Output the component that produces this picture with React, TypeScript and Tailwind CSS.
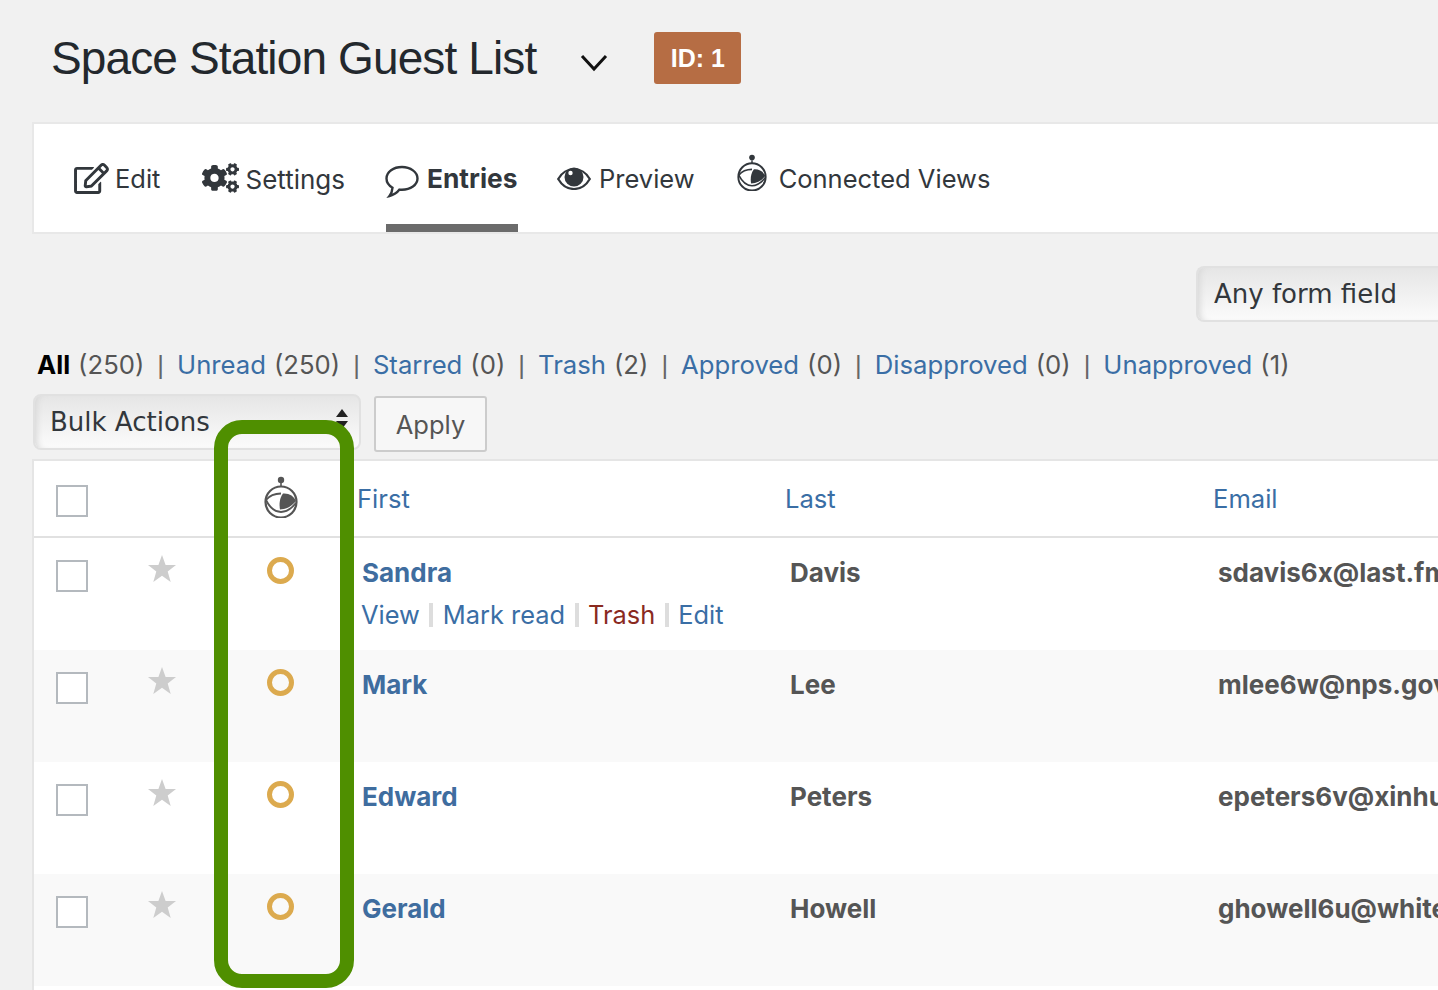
import { FaCogs, FaRegEdit } from "react-icons/fa";

const sans = "font-['Inter',sans-serif]";

function ViewsLogo({ className }: { className: string }) {
  return (
    <svg viewBox="0 0 34 42" className={className} fill="none" stroke="currentColor">
      <circle cx="17" cy="4" r="3.2" fill="currentColor" stroke="none" />
      <path d="M17 7v4" strokeWidth="1.6" />
      <circle cx="17" cy="26" r="15.5" strokeWidth="2.2" />
      <path d="M2 24c4-5 9-6.500 15-6.500" strokeWidth="1.800" />
      <path d="M2 24c4 8 9 12 15 12s11-4 15-9" strokeWidth="1.800" />
      <path d="M16 33.500c-1-5.500-.5-11.500 3-16 6-.5 11 2.500 13 7.500-4 5-9 8-16 8.500z" fill="currentColor" stroke="none" />
    </svg>
  );
}

function Bubble() {
  return (
    <svg viewBox="0 0 34 33" className="w-[34px] h-[33px] text-[#32373c]" fill="none" stroke="currentColor" strokeWidth="2.4">
      <path d="M17 2C8.500 2 1.500 6.800 1.500 13.500c0 3.800 2.300 7 6 9.200-.2 3-1 5.800-3 8.300 4-1 7.800-3.500 10-6.400 1 .1 1.800.1 2.500.1 8.500 0 15.500-4.800 15.500-11.200S25.500 2 17 2z" />
    </svg>
  );
}

function Eye() {
  return (
    <svg viewBox="0 0 34 24" className="w-[34px] h-[24px] text-[#32373c]" fill="none" stroke="currentColor" strokeWidth="2.2">
      <path d="M1.200 13C5 6.500 10.500 3 17 3s12 3.500 15.800 10c-3.800 6.500-9.300 10-15.800 10S5 19.500 1.200 13z" />
      <circle cx="17" cy="11" r="9.500" fill="currentColor" stroke="none" />
      <circle cx="13.500" cy="7" r="2.200" fill="white" stroke="none" />
    </svg>
  );
}

function Star() {
  return (
    <svg viewBox="0 0 28 28" className="w-[28px] h-[28px] text-[#cdcdcd]" fill="currentColor">
      <path d="M14 0l3.600 10H28l-8.300 6.400 3 10.600L14 20.800 5.300 27l3-10.600L0 10h10.400z" />
    </svg>
  );
}

function Box() {
  return <div className="w-[32px] h-[32px] bg-white border-2 border-[#b4b9be] ml-[22px]" />;
}

function Sep() {
  return <div className="w-[4px] h-[24px] mt-[2px] mx-[9.500px] bg-[#dddddd]" />;
}

const cols = "grid grid-cols-[94px_68px_161px_428px_428px_1fr]";

const rows = [
  { first: "Sandra", last: "Davis", email: "sdavis6x@last.fm", actions: true },
  { first: "Mark", last: "Lee", email: "mlee6w@nps.gov", actions: false },
  { first: "Edward", last: "Peters", email: "epeters6v@xinhuanet.com", actions: false },
  { first: "Gerald", last: "Howell", email: "ghowell6u@whitehouse.gov", actions: false },
];

const filters = [
  ["Unread", "250"],
  ["Starred", "0"],
  ["Trash", "2"],
  ["Approved", "0"],
  ["Disapproved", "0"],
  ["Unapproved", "1"],
];

export default function App() {
  return (
    <div className={`relative w-[1438px] h-[990px] overflow-hidden bg-[#f1f1f1] ${sans} text-[#32373c]`}>
      {/* Title */}
      <div className="flex items-center h-[122px] pl-[51px] pb-[6px]">
        <h1 className="font-['Liberation_Sans',sans-serif] text-[46px] leading-none tracking-[-0.87px] text-[#23282d] whitespace-nowrap">
          Space Station Guest List
        </h1>
        <svg viewBox="0 0 28 18" className="w-[28px] h-[18px] ml-[44px] mt-[10px] text-[#111]" fill="none" stroke="currentColor" strokeWidth="3">
          <path d="M2 2l12 13L26 2" />
        </svg>
        <div className="ml-[46px] w-[87px] h-[52px] pt-[2px] rounded-[3px] bg-[#b66d44] text-white font-['Liberation_Sans',sans-serif] font-bold text-[25px] flex items-center justify-center">
          ID: 1
        </div>
      </div>

      {/* Tabs */}
      <div className="ml-[32px] h-[112px] bg-white border-2 border-r-0 border-[#e8e8e8] flex pl-[40px] text-[25.5px] text-[#32373c] whitespace-nowrap">
        <div className="flex items-center gap-[6px] h-[108px]">
          <FaRegEdit className="w-[35px] h-[31px] text-[#32373c]" />
          <span className="mt-[2px]">Edit</span>
        </div>
        <div className="flex items-center gap-[6px] h-[108px] ml-[42px]">
          <FaCogs className="w-[37px] h-[34px] text-[#32373c]" />
          <span className="mt-[2px] text-[26px]">Settings</span>
        </div>
        <div className="relative flex items-center h-[108px] ml-[41px] w-[132px] border-b-[8px] border-[#6b6b6b] font-bold text-[26.3px]">
          <div className="absolute left-[-1px] top-[41px]">
            <Bubble />
          </div>
          <span className="pl-[41px] pt-[10px]">Entries</span>
        </div>
        <div className="flex items-center gap-[8px] h-[108px] ml-[39px]">
          <Eye />
          <span className="mt-[2px]">Preview</span>
        </div>
        <div className="flex items-center gap-[12px] h-[108px] ml-[42px]">
          <ViewsLogo className="w-[30px] h-[37px] text-[#32373c] -mt-[11px]" />
          <span className="mt-[2px]">Connected Views</span>
        </div>
      </div>

      {/* Search field */}
      <div className="flex justify-end h-[56px] mt-[32px]">
        <div className="w-[242px] h-[56px] rounded-l-[8px] border-2 border-r-0 border-[#e1e1e1] bg-gradient-to-b from-[#e6e6e6] to-[#fbfbfb] shadow-[inset_6px_0_6px_-4px_#d8d8d8] font-['DejaVu_Sans',sans-serif] text-[26px] leading-[52px] pl-[16px] text-[#32373c]">
          Any form field
        </div>
      </div>

      {/* Filters */}
      <div className="flex items-center h-[32px] mt-[27px] ml-[37px] text-[25.7px] whitespace-nowrap text-[#555]">
        <span className="font-bold text-black">All</span>
        <span className="ml-[8px]">(250)</span>
        {filters.map(([label, count]) => (
          <span key={label} className="flex">
            <span className="font-['Liberation_Sans',sans-serif] text-[#666] mx-[13px]">|</span>
            <span className="text-[#3a6ea5]">{label}</span>
            <span className="ml-[8px]">({count})</span>
          </span>
        ))}
      </div>

      {/* Bulk actions */}
      <div className="flex ml-[33px] mt-[13px] h-[65px]">
        <div className="relative w-[328px] h-[56px] rounded-[8px] border-2 border-[#e1e1e1] bg-gradient-to-b from-[#e6e6e6] to-[#fbfbfb] shadow-[inset_6px_0_6px_-4px_#d8d8d8] font-['DejaVu_Sans',sans-serif] text-[26px] leading-[52px] pl-[15px]">
          Bulk Actions
          <svg viewBox="0 0 14 24" className="absolute right-[10px] top-[11px] w-[14px] h-[24px] text-[#222]" fill="currentColor">
            <path d="M7 2l6 8H1zM7 22l6-8H1z" />
          </svg>
        </div>
        <div className="ml-[13px] mt-[2px] pt-[2px] w-[113px] h-[56px] rounded-[3px] border-2 border-[#cccccc] bg-[#f7f7f7] text-[#555] text-[25.500px] flex items-center justify-center">
          Apply
        </div>
      </div>

      {/* Table */}
      <div className="ml-[32px] bg-white border-l-2 border-t-2 border-[#e5e5e5] text-[25.600px]">
        <div className={`${cols} items-center h-[77px] border-b-2 border-[#e1e1e1] text-[#3a6ea5]`}>
          <div className="mt-[5px]">
            <Box />
          </div>
          <div />
          <div className="flex justify-center pl-[8px] text-[#555]">
            <ViewsLogo className="w-[34px] h-[42px] -mt-[3px]" />
          </div>
          <div className="mt-[2px]">First</div>
          <div className="mt-[2px]">Last</div>
          <div className="mt-[2px]">Email</div>
        </div>
        {rows.map((row, i) => (
          <div key={row.first} className={`${cols} h-[112px] pt-[22px] ${i % 2 ? "bg-[#f9f9f9]" : "bg-white"}`}>
            <Box />
            <div className="flex justify-center -mt-[5px]">
              <Star />
            </div>
            <div className="flex justify-center pl-[8px]">
              <div className="w-[27px] h-[27px] mt-[-3px] rounded-full border-[5px] border-[#dcaa4e]" />
            </div>
            <div className="pl-[5px] whitespace-nowrap -mt-[1px]">
              <div className="font-bold text-[26px] text-[#3f6d9f] leading-[28px]">{row.first}</div>
              {row.actions && (
                <div className="flex -ml-[1px] mt-[14px] leading-[28px] text-[#3a6ea5] text-[25.400px]">
                  <span>View</span>
                  <Sep />
                  <span>Mark read</span>
                  <Sep />
                  <span className="text-[#8a2a1f]">Trash</span>
                  <Sep />
                  <span>Edit</span>
                </div>
              )}
            </div>
            <div className="pl-[5px] -mt-[1px] font-bold text-[26px] text-[#555] leading-[28px]">{row.last}</div>
            <div className="pl-[5px] -mt-[1px] font-bold text-[26px] text-[#555] leading-[28px] whitespace-nowrap">{row.email}</div>
          </div>
        ))}
        <div className="h-[20px] bg-white" />
      </div>

      {/* Highlight frame */}
      <div className="absolute left-[214px] top-[420px] w-[140px] h-[568px] rounded-[28px] border-[14px] border-[#4f8f00]" />
    </div>
  );
}
